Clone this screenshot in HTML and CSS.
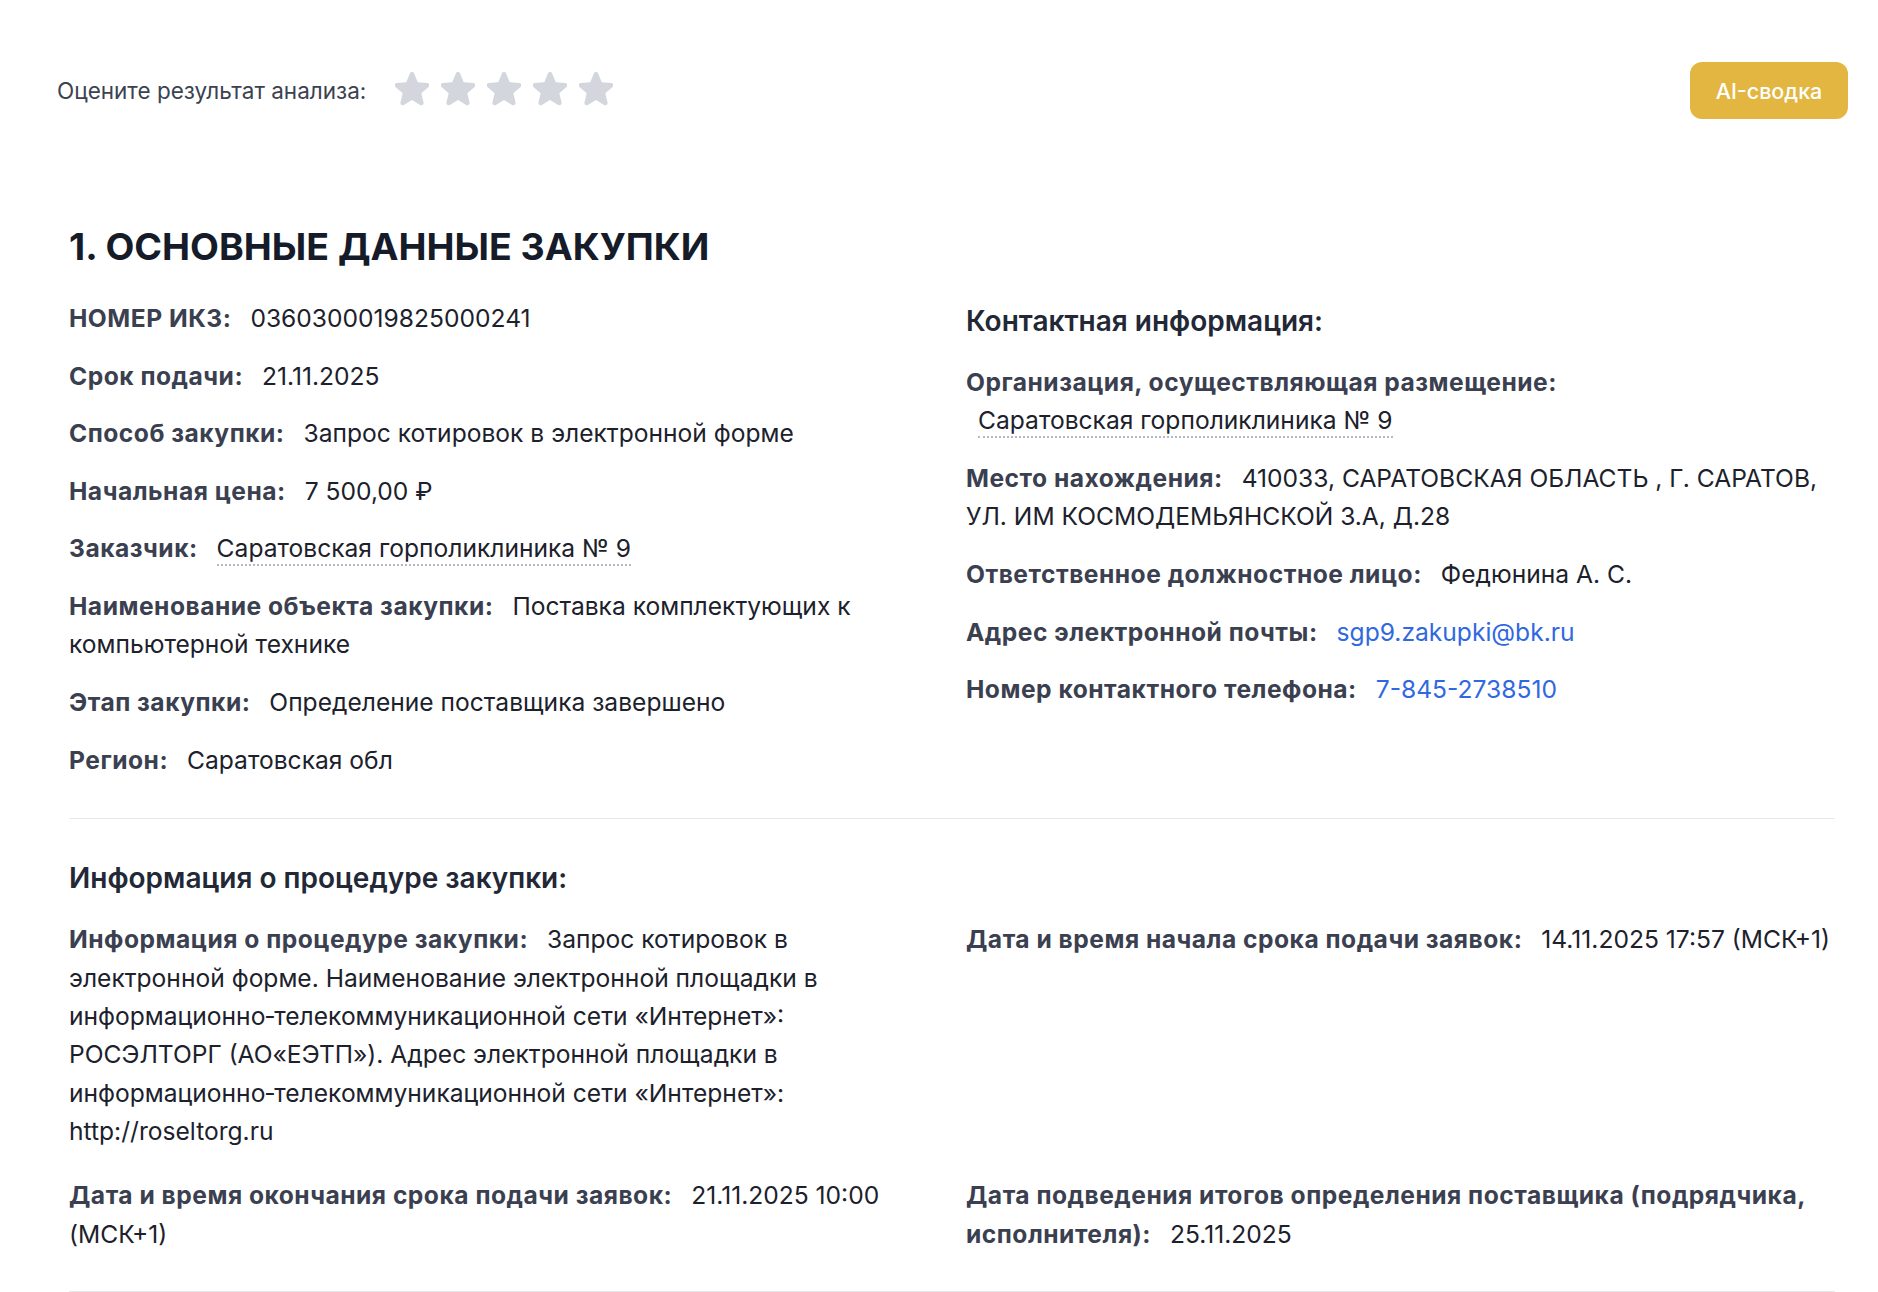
FILE: index.html
```html
<!DOCTYPE html>
<html lang="ru">
<head>
<meta charset="utf-8">
<title>Основные данные закупки</title>
<link rel="stylesheet" href="styles.css">
</head>
<body>
<header class="topbar">
  <div class="rating">
    <span class="rating-label">Оцените результат анализа:</span>
    <div class="stars">
      <svg class="star" viewBox="2.3 2.4 19.4 19.4"><path d="M10.788 3.21c.448-1.077 1.976-1.077 2.424 0l2.082 5.007 5.404.433c1.164.093 1.636 1.545.749 2.305l-4.117 3.527 1.257 5.273c.271 1.136-.964 2.033-1.96 1.425L12 18.354 7.373 21.18c-.996.608-2.231-.29-1.96-1.425l1.257-5.273-4.117-3.527c-.887-.76-.415-2.212.749-2.305l5.404-.433 2.082-5.006z"/></svg>
      <svg class="star" viewBox="2.3 2.4 19.4 19.4"><path d="M10.788 3.21c.448-1.077 1.976-1.077 2.424 0l2.082 5.007 5.404.433c1.164.093 1.636 1.545.749 2.305l-4.117 3.527 1.257 5.273c.271 1.136-.964 2.033-1.96 1.425L12 18.354 7.373 21.18c-.996.608-2.231-.29-1.96-1.425l1.257-5.273-4.117-3.527c-.887-.76-.415-2.212.749-2.305l5.404-.433 2.082-5.006z"/></svg>
      <svg class="star" viewBox="2.3 2.4 19.4 19.4"><path d="M10.788 3.21c.448-1.077 1.976-1.077 2.424 0l2.082 5.007 5.404.433c1.164.093 1.636 1.545.749 2.305l-4.117 3.527 1.257 5.273c.271 1.136-.964 2.033-1.96 1.425L12 18.354 7.373 21.18c-.996.608-2.231-.29-1.96-1.425l1.257-5.273-4.117-3.527c-.887-.76-.415-2.212.749-2.305l5.404-.433 2.082-5.006z"/></svg>
      <svg class="star" viewBox="2.3 2.4 19.4 19.4"><path d="M10.788 3.21c.448-1.077 1.976-1.077 2.424 0l2.082 5.007 5.404.433c1.164.093 1.636 1.545.749 2.305l-4.117 3.527 1.257 5.273c.271 1.136-.964 2.033-1.96 1.425L12 18.354 7.373 21.18c-.996.608-2.231-.29-1.96-1.425l1.257-5.273-4.117-3.527c-.887-.76-.415-2.212.749-2.305l5.404-.433 2.082-5.006z"/></svg>
      <svg class="star" viewBox="2.3 2.4 19.4 19.4"><path d="M10.788 3.21c.448-1.077 1.976-1.077 2.424 0l2.082 5.007 5.404.433c1.164.093 1.636 1.545.749 2.305l-4.117 3.527 1.257 5.273c.271 1.136-.964 2.033-1.96 1.425L12 18.354 7.373 21.18c-.996.608-2.231-.29-1.96-1.425l1.257-5.273-4.117-3.527c-.887-.76-.415-2.212.749-2.305l5.404-.433 2.082-5.006z"/></svg>
    </div>
  </div>
  <button class="ai-btn">AI-сводка</button>
</header>

<main class="content">
  <section class="section section-main">
    <h2 class="section-title">1. ОСНОВНЫЕ ДАННЫЕ ЗАКУПКИ</h2>
    <div class="cols">
      <div class="col">
        <div class="row"><span class="label">НОМЕР ИКЗ:</span> <span class="value">0360300019825000241</span></div>
        <div class="row"><span class="label">Срок подачи:</span> <span class="value">21.11.2025</span></div>
        <div class="row"><span class="label">Способ закупки:</span> <span class="value">Запрос котировок в электронной форме</span></div>
        <div class="row"><span class="label">Начальная цена:</span> <span class="value">7 500,00 ₽</span></div>
        <div class="row"><span class="label">Заказчик:</span> <a class="value org-link">Саратовская горполиклиника № 9</a></div>
        <div class="row"><span class="label">Наименование объекта закупки:</span> <span class="value">Поставка комплектующих к компьютерной технике</span></div>
        <div class="row"><span class="label">Этап закупки:</span> <span class="value">Определение поставщика завершено</span></div>
        <div class="row"><span class="label">Регион:</span> <span class="value">Саратовская обл</span></div>
      </div>
      <div class="col">
        <h3 class="sub-title">Контактная информация:</h3>
        <div class="row"><span class="label">Организация, осуществляющая размещение:</span> <a class="value org-link">Саратовская горполиклиника № 9</a></div>
        <div class="row"><span class="label">Место нахождения:</span> <span class="value">410033, САРАТОВСКАЯ ОБЛАСТЬ , Г. САРАТОВ, УЛ. ИМ КОСМОДЕМЬЯНСКОЙ З.А, Д.28</span></div>
        <div class="row"><span class="label">Ответственное должностное лицо:</span> <span class="value">Федюнина А. С.</span></div>
        <div class="row"><span class="label">Адрес электронной почты:</span> <a class="value link">sgp9.zakupki@bk.ru</a></div>
        <div class="row"><span class="label">Номер контактного телефона:</span> <a class="value link">7-845-2738510</a></div>
      </div>
    </div>
  </section>

  <section class="section section-proc">
    <h3 class="sub-title">Информация о процедуре закупки:</h3>
    <div class="cols cols-proc">
      <div class="row"><span class="label">Информация о процедуре закупки:</span> <span class="value">Запрос котировок в электронной форме. Наименование электронной площадки в информационно&#8209;телекоммуникационной сети «Интернет»: РОСЭЛТОРГ (АО«ЕЭТП»). Адрес электронной площадки в информационно&#8209;телекоммуникационной сети «Интернет»: http://roseltorg.ru</span></div>
      <div class="row"><span class="label">Дата и время начала срока подачи заявок:</span> <span class="value">14.11.2025 17:57 (МСК+1)</span></div>
      <div class="row"><span class="label">Дата и время окончания срока подачи заявок:</span> <span class="value">21.11.2025 10:00 (МСК+1)</span></div>
      <div class="row"><span class="label">Дата подведения итогов определения поставщика (подрядчика, исполнителя):</span> <span class="value">25.11.2025</span></div>
    </div>
  </section>
</main>
</body>
</html>
```

FILE: styles.css
```css
* { box-sizing: border-box; }

html, body {
  margin: 0;
  padding: 0;
  background: #ffffff;
}

body {
  font-family: Inter, "Noto Sans", "Liberation Sans", sans-serif;
  color: #1f2430;
}

.topbar {
  display: flex;
  justify-content: space-between;
  align-items: center;
  padding: 62px 30px 0 57px;
}

.rating {
  display: flex;
  align-items: center;
}

.rating-label {
  font-size: 22.5px;
  color: #3b4250;
}

.stars {
  display: flex;
  gap: 12px;
  margin-left: 29px;
  margin-bottom: 4px;
}

.star {
  width: 34px;
  height: 34px;
  fill: #d3d6dd;
  display: block;
}

.ai-btn {
  height: 57px;
  width: 158px;
  border: none;
  border-radius: 12px;
  background: #e2b640;
  color: #ffffff;
  font-family: Inter, "Noto Sans", sans-serif;
  font-size: 21.5px;
  font-weight: 500;
  padding: 0;
}

.content {
  padding: 0 43px 0 69px;
}

.section-main {
  padding-bottom: 20px;
  border-bottom: 1px solid #e6e8ec;
}

.section-title {
  font-size: 37.5px;
  line-height: 44px;
  font-weight: 700;
  color: #161b29;
  margin: 106px 0 30px;
}

.cols {
  display: grid;
  grid-template-columns: 1fr 1fr;
  column-gap: 28px;
}

.row {
  font-size: 24.6px;
  line-height: 38.4px;
  margin-bottom: 19.2px;
}

.label {
  font-weight: 700;
  letter-spacing: 0.5px;
  color: #3a4050;
}

.value {
  margin-left: 12px;
  color: #1c212c;
}

.org-link {
  display: inline-block;
  line-height: 32px;
  border-bottom: 2px dotted #b3b8c3;
}

.link {
  color: #2f68e0;
  text-decoration: none;
}

.sub-title {
  font-size: 28px;
  line-height: 44px;
  font-weight: 600;
  color: #232836;
  margin: 0 0 20px;
}

.section-proc {
  padding-top: 37px;
  padding-bottom: 19px;
  border-bottom: 1px solid #e6e8ec;
}

.cols-proc {
  row-gap: 6.4px;
}
```
